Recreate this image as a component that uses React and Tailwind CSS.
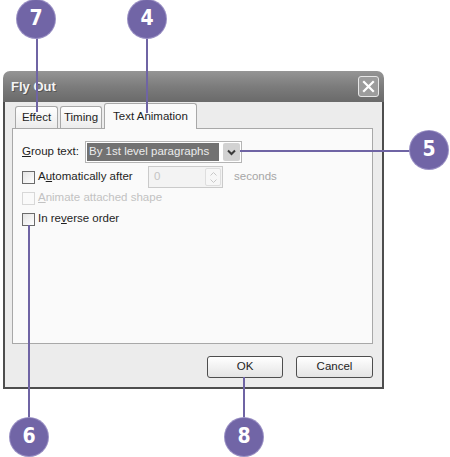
import React from "react";

const Callout = ({ n, className }) => (
  <div
    className={`absolute w-[38px] h-[38px] rounded-full bg-[#7165a6] ring-1 ring-[#9a90c4] flex items-center justify-center text-white text-[21px] font-bold font-['DejaVu_Sans_Condensed','DejaVu_Sans',sans-serif] font-stretch-condensed ${className}`}
  >
    {n}
  </div>
);

const Checkbox = ({ disabled }) => (
  <div
    className={`w-[13px] h-[13px] border ${
      disabled ? "border-[#d8d8d8] bg-[#fafafa]" : "border-[#6b6b6b] bg-gradient-to-br from-[#e4e4e4] to-white"
    }`}
  />
);

const App = () => {
  return (
    <div className="relative w-[450px] h-[457px] bg-white overflow-hidden font-['Liberation_Sans',Arial,sans-serif] text-[11.5px] text-[#1e1e1e]">
      <div className="pt-[71px] pl-[3px]">
        <div className="w-[381px] h-[318px] flex flex-col">
          {/* title bar */}
          <div className="h-[31px] rounded-t-[7px] bg-gradient-to-b from-[#959595] via-[#7c7c7c] to-[#6a6a6a] flex items-center justify-between pl-[8px] pr-[5px]">
            <span className="text-[13px] font-bold text-[#f4f4f4] [text-shadow:1px_1px_0_#555]">Fly Out</span>
            <div className="w-[21px] h-[21px] rounded-[3px] border border-[#e6e6e6] bg-[#9c9c9c] flex items-center justify-center">
              <svg width="13" height="13" viewBox="0 0 13 13">
                <path d="M2 2 L11 11 M11 2 L2 11" stroke="#fff" strokeWidth="2.2" strokeLinecap="square" />
              </svg>
            </div>
          </div>

          {/* body */}
          <div className="flex-1 flex flex-col bg-[#ececec] border-x-2 border-b-2 border-[#4e4e4e] pl-[7px] pr-[9px]">
            {/* tabs */}
            <div className="h-[26px] flex items-end gap-[2px] pl-[3px]">
              <div className="w-[43px] h-[22px] border border-b-0 border-[#a8a8a8] rounded-t-[3px] bg-gradient-to-b from-white to-[#ececec] flex items-center justify-center">
                Effect
              </div>
              <div className="w-[42px] h-[22px] border border-b-0 border-[#a8a8a8] rounded-t-[3px] bg-gradient-to-b from-white to-[#ececec] flex items-center justify-center">
                Timing
              </div>
              <div className="relative z-10 -mb-px w-[93px] h-[26px] border border-b-0 border-[#a8a8a8] rounded-t-[3px] bg-[#fafafa] flex items-center justify-center pt-[1px]">
                Text Animation
              </div>
            </div>

            {/* panel */}
            <div className="h-[216px] border border-[#a8a8a8] bg-[#fafafa] pl-[9px] pt-[12px] flex flex-col">
              <div className="h-[22px] flex items-center">
                <span className="w-[63px]">
                  <span className="underline">G</span>roup text:
                </span>
                <div className="w-[157px] h-[22px] border border-[#b4b4b4] bg-white flex items-center p-[1px] gap-[4px]">
                  <div className="w-[132px] h-[18px] bg-[#727272] text-[#ececec] flex items-center pl-[2px]">
                    By 1st level paragraphs
                  </div>
                  <div className="w-[17px] h-[18px] rounded-[2px] bg-[#d2d2d2] flex items-center justify-center">
                    <svg width="9" height="7" viewBox="0 0 9 7">
                      <path d="M1 1.5 L4.5 5 L8 1.5" stroke="#3c3c3c" strokeWidth="2" fill="none" />
                    </svg>
                  </div>
                </div>
              </div>

              <div className="h-[22px] mt-[3px] flex items-center">
                <div className="w-[126px] flex items-center gap-[3px]">
                  <Checkbox />
                  <span>
                    A<span className="underline">u</span>tomatically after
                  </span>
                </div>
                <div className="w-[75px] h-[22px] border border-[#cacaca] bg-[#f3f3f3] flex items-center justify-between pl-[5px] pr-[1px]">
                  <span className="text-[#c4c4c4]">0</span>
                  <div className="w-[16px] h-[18px] rounded-[2px] border border-[#dedede] bg-[#f7f7f7] flex flex-col items-center justify-center gap-[3px]">
                    <svg width="7" height="4" viewBox="0 0 7 4">
                      <path d="M0.5 3.5 L3.5 0.5 L6.5 3.5" stroke="#c8c8c8" fill="none" />
                    </svg>
                    <svg width="7" height="4" viewBox="0 0 7 4">
                      <path d="M0.5 0.5 L3.5 3.5 L6.5 0.5" stroke="#c8c8c8" fill="none" />
                    </svg>
                  </div>
                </div>
                <span className="ml-[11px] text-[#a6a6a6]">seconds</span>
              </div>

              <div className="h-[20px] flex items-center gap-[3px] text-[#c2c2c2]">
                <Checkbox disabled />
                <span>
                  <span className="underline">A</span>nimate attached shape
                </span>
              </div>

              <div className="h-[20px] mt-[1px] flex items-center gap-[3px]">
                <Checkbox />
                <span>
                  In re<span className="underline">v</span>erse order
                </span>
              </div>
            </div>

            {/* buttons */}
            <div className="mt-[12px] flex justify-end gap-[13px]">
              <div className="w-[76px] h-[22px] rounded-[3px] border border-[#4e4e4e] bg-gradient-to-b from-white to-[#e4e4e4] flex items-center justify-center">
                OK
              </div>
              <div className="w-[77px] h-[22px] rounded-[3px] border border-[#4e4e4e] bg-gradient-to-b from-white to-[#e4e4e4] flex items-center justify-center">
                Cancel
              </div>
            </div>
          </div>
        </div>
      </div>

      {/* callout leader lines */}
      <div className="absolute left-[36px] top-[36px] w-[2px] h-[76px] bg-[#6f64a4] z-20" />
      <div className="absolute left-[146px] top-[36px] w-[2px] h-[77px] bg-[#6f64a4] z-20" />
      <div className="absolute left-[240px] top-[150px] w-[172px] h-[2px] bg-[#6f64a4] z-20" />
      <div className="absolute left-[28px] top-[225px] w-[2px] h-[196px] bg-[#6f64a4] z-20" />
      <div className="absolute left-[243px] top-[377px] w-[2px] h-[44px] bg-[#6f64a4] z-20" />

      <Callout n="7" className="left-[17px] top-0 z-30" />
      <Callout n="4" className="left-[128px] top-0 z-30" />
      <Callout n="5" className="left-[410px] top-[131px] z-30" />
      <Callout n="6" className="left-[10px] top-[418px] z-30" />
      <Callout n="8" className="left-[225px] top-[418px] z-30" />
    </div>
  );
};

export default App;
